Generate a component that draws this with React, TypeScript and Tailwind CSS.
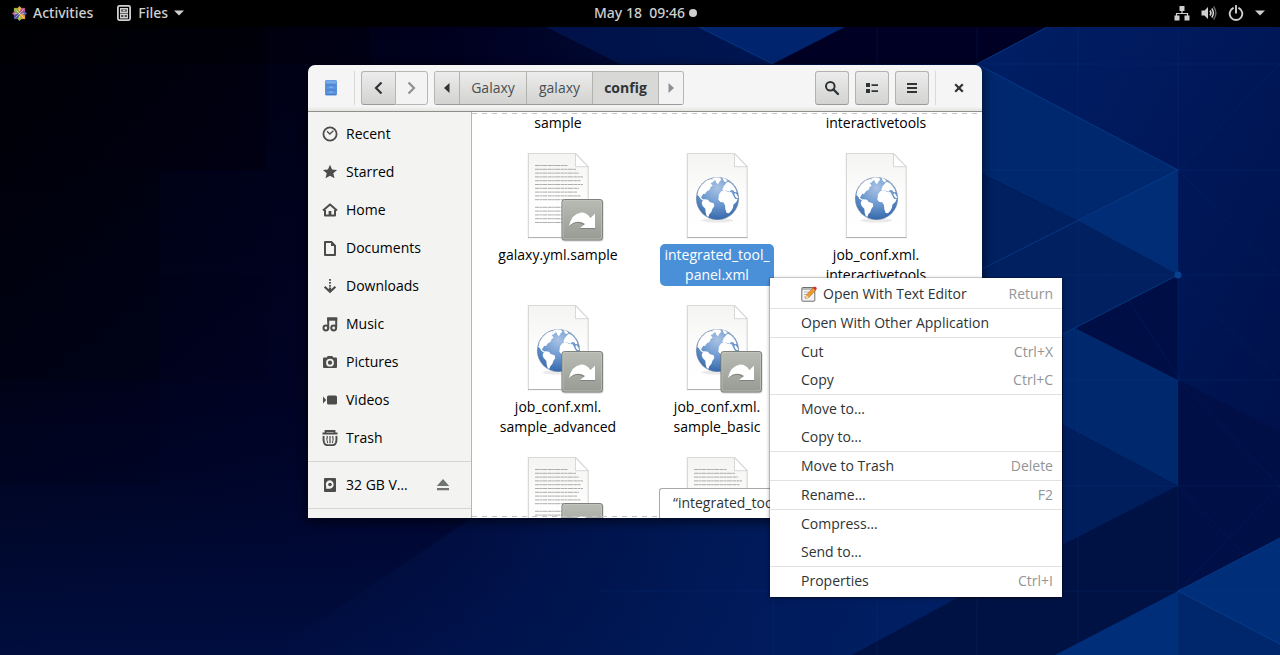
import type { ReactNode } from "react";

type Kind = "text" | "web";
type FileEntry = { lines: string[]; kind: Kind; link?: boolean; selected?: boolean };
type MenuEntry = { label: string; keys?: string; icon?: boolean };

const files: FileEntry[] = [
  { lines: ["error_report.yml.", "sample"], kind: "text", link: true },
  { lines: ["galaxy.yml"], kind: "text" },
  { lines: ["galaxy.yml.", "interactivetools"], kind: "text" },
  { lines: ["galaxy.yml.sample"], kind: "text", link: true },
  { lines: ["integrated_tool_", "panel.xml"], kind: "web", selected: true },
  { lines: ["job_conf.xml.", "interactivetools"], kind: "web" },
  { lines: ["job_conf.xml.", "sample_advanced"], kind: "web", link: true },
  { lines: ["job_conf.xml.", "sample_basic"], kind: "web", link: true },
  { lines: ["job_conf.xml"], kind: "web" },
  { lines: ["job_metrics_", "conf.yml.sample"], kind: "text", link: true },
  { lines: ["local_conda"], kind: "text" },
  { lines: ["migrated_tools"], kind: "text" },
];

const menu: MenuEntry[][] = [
  [{ label: "Open With Text Editor", keys: "Return", icon: true }],
  [{ label: "Open With Other Application" }],
  [
    { label: "Cut", keys: "Ctrl+X" },
    { label: "Copy", keys: "Ctrl+C" },
  ],
  [{ label: "Move to…" }, { label: "Copy to…" }],
  [{ label: "Move to Trash", keys: "Delete" }],
  [{ label: "Rename…", keys: "F2" }],
  [{ label: "Compress…" }, { label: "Send to…" }],
  [{ label: "Properties", keys: "Ctrl+I" }],
];

function Glyph({ children, className = "size-4" }: { children: ReactNode; className?: string }) {
  return (
    <svg viewBox="0 0 16 16" className={className} fill="none" stroke="none" aria-hidden="true">
      {children}
    </svg>
  );
}

const places: { label: string; icon: ReactNode }[] = [
  {
    label: "Recent",
    icon: (
      <>
        <circle cx="8" cy="8" r="6.6" stroke="currentColor" strokeWidth="1.8" />
        <path d="M5 5.2 7.8 8l3.6-3.2" stroke="currentColor" strokeWidth="1.3" />
      </>
    ),
  },
  {
    label: "Starred",
    icon: <path fill="currentColor" d="m8 .8 2.1 4.7 5 .5-3.8 3.3 1.2 5L8 11.8l-4.5 2.5 1.2-5L.9 6l5-.5z" />,
  },
  {
    label: "Home",
    icon: (
      <>
        <path d="M1 8.6 8 2.4l7 6.2M3 8v5.4h10V8" stroke="currentColor" strokeWidth="2" strokeLinejoin="round" />
        <path d="M6.6 9h2.8v5H6.6z" fill="currentColor" />
      </>
    ),
  },
  {
    label: "Documents",
    icon: (
      <>
        <path d="M3 2h6.4L13 5.600V15H3z" stroke="currentColor" strokeWidth="2" strokeLinejoin="round" />
        <path d="M9 1v5h5z" fill="currentColor" />
      </>
    ),
  },
  {
    label: "Downloads",
    icon: (
      <>
        <path d="M8 1v1.700M8 4v1.700M8 7v1.700" stroke="currentColor" strokeWidth="1.800" />
        <path d="M8 9.500v4M2.600 8.800 8 13.800l5.400-5" stroke="currentColor" strokeWidth="2.200" />
      </>
    ),
  },
  {
    label: "Music",
    icon: (
      <>
        <path d="M6.200 12.500V2.500h8v9" stroke="currentColor" strokeWidth="2" />
        <path d="M5.200 1.500h10v3.200h-10z" fill="currentColor" />
        <circle cx="3.900" cy="12" r="2.400" stroke="currentColor" strokeWidth="2" />
        <circle cx="11.700" cy="12" r="2.400" stroke="currentColor" strokeWidth="2" />
      </>
    ),
  },
  {
    label: "Pictures",
    icon: (
      <>
        <path
          fill="currentColor"
          fillRule="evenodd"
          d="M1 4.500Q1 3.500 2 3.500h2.600L5.800 2h4.400l1.200 1.500H14q1 0 1 1V13q0 1-1 1H2q-1 0-1-1zM8 4.800a3.900 3.900 0 1 0 0 7.800 3.900 3.900 0 0 0 0-7.800"
        />
        <circle cx="8" cy="8.700" r="2.100" fill="currentColor" />
      </>
    ),
  },
  {
    label: "Videos",
    icon: <path fill="currentColor" d="M5 5q0-1.500 1.500-1.500h7Q15 3.500 15 5v6.500q0 1-1.500 1h-7Q5 12.500 5 11zM1 4.500 4.200 8 1 11.500z" />,
  },
  {
    label: "Trash",
    icon: (
      <>
        <path d="M.5 3.500h15M3.500 3V1h9V3" stroke="currentColor" strokeWidth="1.800" />
        <path d="M1.700 6q-.5 3.500.3 6.500.8 2.700 3.500 2.700h5q2.700 0 3.500-2.700.8-3 .3-6.500" stroke="currentColor" strokeWidth="1.900" />
        <path d="M5.400 6q-1.300 3.500.3 7M8 6v7.200M10.600 6q1.300 3.500-.3 7" stroke="currentColor" strokeWidth="1.200" />
      </>
    ),
  },
];

function Wallpaper() {
  return (
    <svg
      viewBox="0 0 1280 655"
      preserveAspectRatio="xMidYMid slice"
      className="absolute inset-0 size-full"
      aria-hidden="true"
    >
      <defs>
        <linearGradient id="sky" x1="0" y1="0" x2="1" y2="0">
          <stop offset="0" stopColor="#000006" />
          <stop offset=".36" stopColor="#00001e" />
          <stop offset=".62" stopColor="#001248" />
          <stop offset="1" stopColor="#001858" />
        </linearGradient>
        <linearGradient id="rise" x1="0" y1="0" x2="0" y2="1">
          <stop offset="0" stopColor="#00083a" stopOpacity="0" />
          <stop offset=".6" stopColor="#00083a" stopOpacity=".4" />
          <stop offset="1" stopColor="#001048" stopOpacity=".85" />
        </linearGradient>
        <linearGradient id="corner" x1="0" y1="0" x2="1" y2="1">
          <stop offset="0" stopColor="#001f66" />
          <stop offset="1" stopColor="#000f48" />
        </linearGradient>
        <linearGradient id="floor" x1="0" y1="0" x2="1" y2="0">
          <stop offset="0" stopColor="#002268" stopOpacity="0" />
          <stop offset="1" stopColor="#002268" />
        </linearGradient>
      </defs>
      <path fill="url(#sky)" d="M0 0h1280v655H0z" />
      <path fill="url(#rise)" d="M0 0h1280v655H0z" />
      <path fill="#000" opacity=".5" d="M0 0h266v64H0z" />
      <path fill="#000" opacity=".25" d="M0 64h160v106H0zM160 64h106v106H160zM0 170h160v106H0zM266 27h104v37H266zM0 276h160v105H0z" />
      <path fill="#000014" opacity=".12" d="M0 381h160v105H0zM160 276h106v105H160z" />
      <path fill="url(#floor)" d="M472 518h510l81 27-211 110H266z" />
      <path fill="#001a5c" d="m699 27 74 37H620l-74-37z" opacity=".6" />
      <path fill="#00246e" d="M699 27h146l-72 37z" />
      <path fill="#000024" d="M845 27h202l-70 37H773z" />
      <path fill="url(#corner)" d="M1047 27h233v511l-102 53V170L977 64z" />
      <path fill="#00286e" d="m977 64 201 106-100 51-96-47z" />
      <path fill="#002060" d="m977 172 101 49-101 50z" />
      <path fill="#002d76" d="M1178 170v105l-100-54z" />
      <path fill="#00205f" d="m1078 221 100 54-115 59-81 4v-69z" />
      <path fill="#000e46" d="m1178 275-103 53 103 52z" />
      <path fill="#00286c" d="m1063 334 12-6 103 52v106l-115-61z" />
      <path fill="#001d5c" d="m1063 425 115 61-115 59z" />
      <path fill="#000f46" d="M1178 275v105l102 51v107l-102 53-115-46 115-59z" />
      <path fill="#001244" d="m1063 545 115-59v105l-123 64H852l107-58h104z" />
      <path fill="#002e78" d="m1280 538-102 53-123 64h225z" />
      <path fill="#00276b" d="m1178 591 102 53v11h-102z" />
      <g stroke="#0a4496" strokeOpacity=".7" fill="none">
        <path d="m699 27 74 37M1047 27l-70 37 201 106-196 99M1178 275l-115 59M1280 538l-102 53 102 53" />
      </g>
      <g stroke="#0b3c8c" strokeOpacity=".2" fill="none">
        <path d="M1178 27v628M1078 27v628M977 27v628M877 27v628M773 27v628M982 170h298M982 275h298M1063 380h217M1063 486h217M600 591h680M982 64h298M1178 170l102 106M1178 380l102 106M1078 221l102 159M1178 170l102-106M1178 591l102-106M1178 275l102 106M1178 486l102 105M1078 221l-96 97" />
      </g>
      <circle cx="1178" cy="275" r="3.500" fill="#08418f" />
    </svg>
  );
}

function Globe() {
  return (
    <>
      <ellipse cx="48.500" cy="73.500" rx="16" ry="2" fill="#000" opacity=".08" />
      <circle cx="48.500" cy="51.500" r="21.600" fill="#8e9fb8" />
      <circle cx="48.500" cy="51.500" r="20.900" fill="url(#ocean)" />
      <g fill="#fff" transform="translate(-179 -2) scale(.33333)">
        <path d="m622 150 4-16 9-14 14-13 14-5 9 3-3 7-7 2 6 8-6 4-3 8-8 5-6 8-5-1-4 6-3 6 6 5 6 1 2 6-7-3-9-6-4-7z" />
        <path d="m666 101 12-4 12 1 4 6-5 5-5 9-5-5-3-7-6 2zM698 99l8 2 6 6-5 5-6-4z" />
        <path d="m637 168 7-5 10 1 5 7 12 4 2 8-6 9-3 9-6 7-3 8-5-3-3-10-1-12-8-8-3-8z" />
        <path d="m697 134 4-10 6-8 6-6 9 4 8 8 7 11 3 9-7-1-3-5-7-1-4 5-8-2-4-3-6 4z" />
        <path d="m687 148 7-9 12-3 8 5 11 1 4 8 6 11 8 1-4 9-9 8-1 9-5 9-7 8-7-1-4-11-1-12-5-9-9-1-6-7z" />
        <path d="m736 144 5 5 4 10-4 1-5-5-3-7z" />
      </g>
    </>
  );
}

const textRows = [33, 41, 44, 48, 46, 48, 44, 42, 46, 38, 0, 36, 44, 42, 45, 36];

function FileIcon({ kind, link }: { kind: Kind; link?: boolean }) {
  return (
    <svg viewBox="0 0 96 96" className="size-24" aria-hidden="true">
      <path d="M17.500 6H66l13 13.500V91.500h-61.500z" fill="#000" opacity=".07" />
      <path d="M18.500 6.500H66l12 13v71H18.500z" fill="url(#sheet)" stroke="#d2d2d0" strokeWidth=".8" />
      <path d="M18 90.500h60.500" stroke="#a9a9a7" strokeWidth=".8" />
      <path d="M65.500 7v12.700H78z" fill="#fff" stroke="#c8c8c6" strokeWidth=".7" />
      {kind === "web" ? (
        <Globe />
      ) : (
        <g stroke="#a3a3a1" strokeWidth=".9" strokeDasharray="4 .4 2.500 .4 5 .5">
          {textRows.map((w, i) => (w ? <path key={i} d={`M25 ${18.5 + i * 3.8}h${w}`} /> : null))}
        </g>
      )}
      {link && (
        <>
          <rect x="51.500" y="52.500" width="42" height="42" rx="3" fill="#000" opacity=".18" />
          <rect x="52" y="52.500" width="40.500" height="40.500" rx="2.500" fill="url(#badge)" stroke="#7f827b" />
          <rect x="53" y="53.500" width="38.500" height="38.500" rx="2" fill="none" stroke="#c6c9c1" strokeOpacity=".6" />
          <path
            fill="#70736c"
            opacity=".7"
            d="M59.500 79.500q2-12 12-13.500 6 0 9.500 5.500l4-5v15.500H69.500l5-3.500q-7-6-15 1"
          />
          <path fill="#fff" d="M59 79q2.500-12 12-13.500 6-.2 9.500 5.500l4.500-4.500v14.500H70l5-4q-8-5.500-16 2" />
        </>
      )}
    </svg>
  );
}

function SharedPaints() {
  return (
    <svg className="absolute size-0" aria-hidden="true">
      <defs>
        <linearGradient id="sheet" x1="0" y1="0" x2="0" y2="1">
          <stop offset="0" stopColor="#f4f4f2" />
          <stop offset=".5" stopColor="#fdfdfd" />
          <stop offset="1" stopColor="#fff" />
        </linearGradient>
        <linearGradient id="badge" x1="0" y1="0" x2="0" y2="1">
          <stop offset="0" stopColor="#b9bcb4" />
          <stop offset="1" stopColor="#989b93" />
        </linearGradient>
        <radialGradient id="ocean" cx=".5" cy=".25" r=".8">
          <stop offset="0" stopColor="#a9c3e4" />
          <stop offset=".5" stopColor="#6c98cf" />
          <stop offset="1" stopColor="#2f62a6" />
        </radialGradient>
      </defs>
    </svg>
  );
}

function TopBar() {
  return (
    <header className="relative grid h-[27px] grid-cols-[1fr_auto_1fr] items-center bg-black pr-[15px] pb-px pl-3 font-['Noto_Sans','Open_Sans',sans-serif] font-medium text-[#cfcfcf]">
      <nav className="flex items-center gap-[23px]">
        <button type="button" className="flex items-center gap-1.5">
          <svg viewBox="0 0 16 16" className="size-[15px]" aria-hidden="true">
            <path fill="#b2548f" d="M8.500 2H14v5.500H8.500z" />
            <path fill="#8fae3c" d="M2 2h5.500v5.500H2z" />
            <path fill="#4a4f9a" d="M2 8.500h5.500V14H2z" />
            <path fill="#e5a43a" d="M8.500 8.500H14V14H8.500z" />
            <path fill="#e3a93c" d="m8 0 2.200 2.500L8 5.500 5.800 2.500z" />
            <path fill="#5a5fae" d="M16 8l-2.500 2.200L10.500 8l3-2.200z" />
            <path fill="#9dbb48" d="m8 16-2.200-2.500L8 10.500l2.200 3z" />
            <path fill="#b868a0" d="M0 8l2.500-2.200L5.500 8l-3 2.200z" />
            <path d="m3.500 3.500 9 9M12.500 3.500l-9 9M8 3v10M3 8h10" stroke="#efe9ea" strokeWidth=".6" />
          </svg>
          Activities
        </button>
        <button type="button" className="flex items-center gap-1.5">
          <Glyph className="size-4">
            <rect x="1.900" y=".9" width="12.200" height="14.200" rx="1.500" stroke="currentColor" strokeWidth="1.800" />
            <path d="M4.700 3.700h6.600v3.600H4.700zM4.700 9.200h6.600v3.600H4.700z" stroke="currentColor" strokeWidth="1.400" />
            <path d="M6.500 5.500h3M6.500 11h3" stroke="currentColor" strokeWidth="1.400" />
          </Glyph>
          Files
          <svg viewBox="0 0 10 6" className="h-1.5 w-2.5" aria-hidden="true">
            <path d="M0 .5h10L5 5.500z" fill="currentColor" />
          </svg>
        </button>
      </nav>
      <button type="button" className="flex items-center gap-1 pl-3.5 whitespace-pre">
        May 18  09:46
        <span className="size-2 rounded-full bg-[#cfcfcf]" />
      </button>
      <button type="button" aria-label="System menu" className="flex items-center gap-[11px] justify-self-end">
        <Glyph>
          <path d="M8 5v4M2.500 12V8.500h11V12" stroke="currentColor" strokeWidth="1.200" />
          <path fill="currentColor" d="M5.500 1h5v5h-5zM.5 10.500h5v5h-5zM10.500 10.500h5v5h-5z" />
        </Glyph>
        <Glyph>
          <path fill="currentColor" d="M.5 5.500h3L7 2v12L3.500 10.500h-3z" />
          <path d="M9 5.500q1.800 2.500 0 5M10.800 3.500q3.200 4.500 0 9" stroke="currentColor" strokeWidth="1.600" />
          <path d="M12.600 1.500q4.600 6.500 0 13" stroke="#666" strokeWidth="1.400" />
        </Glyph>
        <Glyph>
          <path d="M5 3.200a6.300 6.300 0 1 0 6 0M8 .8v7" stroke="currentColor" strokeWidth="1.900" strokeLinecap="round" />
        </Glyph>
        <svg viewBox="0 0 10 6" className="h-1.5 w-2.5" aria-hidden="true">
          <path d="M0 .5h10L5 5.500z" fill="currentColor" />
        </svg>
      </button>
    </header>
  );
}

const raised = "bg-linear-to-b from-[#ececec] to-[#d3d3d1] border-[#b2b2af]";

function ToolButton({ label, children }: { label: string; children: ReactNode }) {
  return (
    <button
      type="button"
      aria-label={label}
      className={`flex size-[34px] items-center justify-center rounded-[3px] border border-b-[#9a9a96] ${raised}`}
    >
      {children}
    </button>
  );
}

function HeaderBar() {
  return (
    <div className="flex h-[47px] shrink-0 items-center border-b border-[#8f8f8a] bg-linear-to-b from-[#f5f5f5] from-90% to-[#e4e4e1] px-[15px] text-[#2e3436]">
      <svg viewBox="0 0 16 16" className="size-4" aria-hidden="true">
        <rect x="2" y="0" width="12" height="15.500" rx="1.500" fill="#5a92dc" />
        <path d="M2.500 1.500Q2.500.4 3.600.4h8.800q1.100 0 1.100 1.100v2h-11z" fill="#7aaae6" />
        <path d="M3 5h10M3 10h10M3 14.500h10" stroke="#4078c4" strokeOpacity=".7" />
        <path d="M6 7.200h4M6 12.200h4" stroke="#8db4ea" />
      </svg>
      <span className="mr-1.5 ml-[15px] h-[34px] w-px bg-[#d9d9d7]" />
      <div className="flex h-[34px]">
        <button
          type="button"
          aria-label="Back"
          className={`flex w-[34px] items-center justify-center rounded-l-[3px] border border-r-0 border-b-[#9a9a96] ${raised}`}
        >
          <Glyph>
            <path d="M10.500 2.500 5 8l5.500 5.500" stroke="currentColor" strokeWidth="2.200" />
          </Glyph>
        </button>
        <button
          type="button"
          aria-label="Forward"
          className="flex w-[33px] items-center justify-center rounded-r-[3px] border border-[#b6b6b3] bg-[#f3f3f3] text-[#8d9191]"
        >
          <Glyph>
            <path d="M4.500 2.500 10 8l-5.500 5.500" stroke="currentColor" strokeWidth="2.200" />
          </Glyph>
        </button>
      </div>
      <div className="ml-1.5 flex h-[34px] divide-x divide-[#b6b6b3] overflow-hidden rounded-[3px] border border-[#b6b6b3] border-b-[#9a9a96] text-[#4a4f51]">
        <button type="button" aria-label="Scroll path left" className={`flex w-[25px] items-center justify-center ${raised}`}>
          <svg viewBox="0 0 6 10" className="h-2.5 w-1.5" aria-hidden="true">
            <path d="M5.500 0v10L0 5z" fill="#2e3436" />
          </svg>
        </button>
        <button type="button" className={`w-[67px] ${raised}`}>
          Galaxy
        </button>
        <button type="button" className={`w-[66px] ${raised}`}>
          galaxy
        </button>
        <button type="button" className="w-[66px] border-[#b6b6b3] bg-[#d8d8d7] font-bold text-[#2e3436]">
          config
        </button>
        <button type="button" aria-label="Scroll path right" className="flex w-6 items-center justify-center border-[#b6b6b3] bg-[#f3f3f3]">
          <svg viewBox="0 0 6 10" className="h-2.5 w-1.5" aria-hidden="true">
            <path d="M.5 0v10L6 5z" fill="#8d9191" />
          </svg>
        </button>
      </div>
      <div className="ml-auto flex items-center gap-1.5">
        <ToolButton label="Search">
          <Glyph>
            <circle cx="6.300" cy="6.300" r="4.300" stroke="currentColor" strokeWidth="2" />
            <path d="m9.500 9.500 4.500 4.500" stroke="currentColor" strokeWidth="2.400" strokeLinecap="round" />
          </Glyph>
        </ToolButton>
        <ToolButton label="List view">
          <Glyph>
            <path fill="currentColor" d="M2 3h4v4H2zM2 9h4v4H2zM7.500 4.200H14v1.900H7.500zM7.500 10.200H14v1.900H7.500z" />
          </Glyph>
        </ToolButton>
        <ToolButton label="Menu">
          <Glyph>
            <path fill="currentColor" d="M3 3h10v2H3zM3 7h10v2H3zM3 11h10v2H3z" />
          </Glyph>
        </ToolButton>
        <span className="h-[34px] w-px bg-[#d9d9d7]" />
        <button type="button" aria-label="Close" className="ml-[9px]">
          <Glyph>
            <path d="m4.200 4.200 7.600 7.600M11.800 4.200l-7.600 7.600" stroke="currentColor" strokeWidth="2.200" />
          </Glyph>
        </button>
      </div>
    </div>
  );
}

function Sidebar() {
  return (
    <aside className="w-[164px] shrink-0 border-r border-[#b6b6b3] bg-[#f3f3f1] pt-[3px]">
      <ul className="text-black">
        {places.map((p) => (
          <li key={p.label}>
            <button type="button" className="flex h-[38px] w-full items-center gap-2 px-3.5 text-left">
              <span className="text-[#4c4c4a]">
                <Glyph>{p.icon}</Glyph>
              </span>
              {p.label}
            </button>
          </li>
        ))}
      </ul>
      <div className="mt-1 flex items-center border-y border-[#d6d6d4] py-1">
        <button type="button" className="flex h-[38px] grow items-center gap-2 pl-3.5 text-left text-black">
          <span className="text-[#4c4c4a]">
            <Glyph>
              <path
                fill="currentColor"
                fillRule="evenodd"
                d="M3 1h10q1 0 1 1v12q0 1-1 1H3q-1 0-1-1V2q0-1 1-1m5 2.200a4.300 4.300 0 0 0-3.800 6.200v2.400h2.400A4.300 4.300 0 1 0 8 3.200"
              />
              <circle cx="8" cy="7.500" r="1.800" fill="currentColor" />
            </Glyph>
          </span>
          32 GB V…
        </button>
        <button type="button" aria-label="Eject" className="mr-5 text-[#707573]">
          <Glyph>
            <path fill="currentColor" d="M8 2 14.200 9H1.800zM2 11h12v2.200H2z" />
          </Glyph>
        </button>
      </div>
    </aside>
  );
}

function FileGrid() {
  return (
    <main className="relative min-w-0 grow overflow-hidden bg-white">
      <div className="-mt-[117px] grid grid-cols-[repeat(auto-fill,158px)] gap-x-px gap-y-[13px] px-[7px] text-black">
        {files.map((f) => (
          <button type="button" key={f.lines.join("")} className="flex h-[139px] flex-col items-center gap-px">
            <FileIcon kind={f.kind} link={f.link} />
            <span
              className={`rounded-[5px] px-1 py-px text-center leading-5 whitespace-nowrap ${
                f.selected ? "bg-[#4a90d9] text-white" : ""
              }`}
            >
              {f.lines.map((l) => (
                <span key={l} className="block">
                  {l}
                </span>
              ))}
            </span>
          </button>
        ))}
      </div>
      <div className="absolute inset-x-0 top-px h-px bg-[repeating-linear-gradient(90deg,#c4c4c4_0_5px,transparent_5px_10px)]" />
      <div className="absolute inset-x-0 bottom-px h-px bg-[repeating-linear-gradient(90deg,#c4c4c4_0_5px,transparent_5px_10px)]" />
      <p className="absolute right-0 bottom-0 w-[323px] truncate rounded-tl-[3px] border-t border-l border-[#a9a9a6] bg-white px-[13px] pt-1 pb-[5px] leading-5 text-[#2e3436]">
        “integrated_tool_panel.xml” selected
      </p>
    </main>
  );
}

function ContextMenu() {
  return (
    <div
      role="menu"
      className="absolute top-[278px] left-[770px] w-[292px] divide-y divide-[#e2e2e2] bg-white py-0.5 text-[#2e3436] shadow-[0_1px_4px_rgba(0,0,0,0.45),0_0_0_1px_rgba(0,0,0,0.12)]"
    >
      {menu.map((group) => (
        <div key={group[0].label} role="group">
          {group.map((m) => (
            <button
              type="button"
              role="menuitem"
              key={m.label}
              className="flex h-7 w-full items-center gap-1.5 pr-[9px] pl-[31px] text-left"
            >
              {m.icon && (
                <Glyph>
                  <rect x=".8" y="1.500" width="13" height="13.700" rx=".8" fill="#f4f4f2" stroke="#6f6f6c" />
                  <path d="M1.500 3h11.500" stroke="#555" strokeWidth="1.600" strokeDasharray="1 1" />
                  <path d="M3 6h6M3 8.500h4M3 11h2" stroke="#aaa" strokeWidth=".8" />
                  <path d="m4.500 12.500 1-3.500L12 2l2.500 2.300-6.700 7.200z" fill="#f39a2d" stroke="#a85a12" strokeWidth=".6" />
                  <path d="m4.500 12.500 1-3.500 2.300 2.500z" fill="#f2d9ac" />
                  <path d="m12 2 1.500-1.500Q16 .8 15.800 3l-1.300 1.300z" fill="#dd2e2e" />
                </Glyph>
              )}
              <span className="grow">{m.label}</span>
              {m.keys && <kbd className="font-[inherit] text-[#929595]">{m.keys}</kbd>}
            </button>
          ))}
        </div>
      ))}
    </div>
  );
}

export default function App() {
  return (
    <div className="relative min-h-screen overflow-hidden bg-[#00001a] font-['Open_Sans','Noto_Sans',sans-serif] text-sm leading-5">
      <Wallpaper />
      <SharedPaints />
      <TopBar />
      <section
        aria-label="Files"
        className="absolute top-[65px] left-[308px] flex h-[453px] w-[674px] flex-col overflow-hidden rounded-t-[7px] shadow-[0_3px_10px_2px_rgba(0,0,0,0.5)]"
      >
        <HeaderBar />
        <div className="flex min-h-0 grow">
          <Sidebar />
          <FileGrid />
        </div>
      </section>
      <ContextMenu />
    </div>
  );
}
